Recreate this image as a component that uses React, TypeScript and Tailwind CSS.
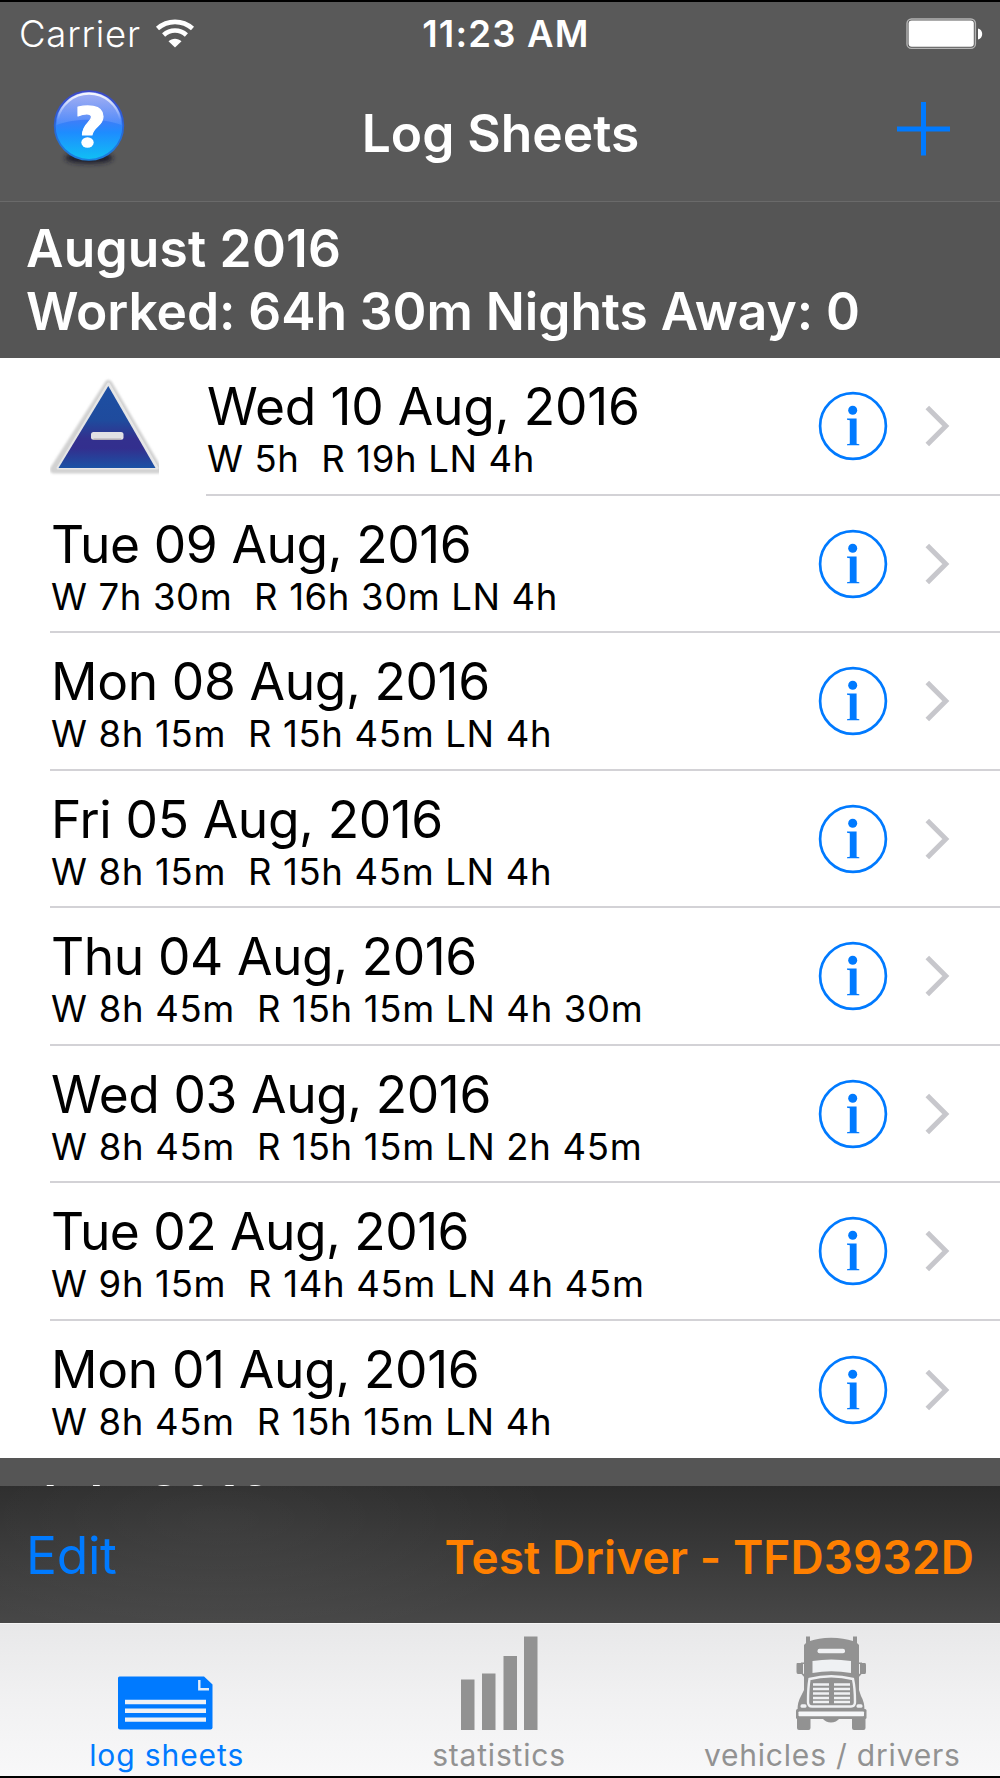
import type { ReactNode } from 'react';

type Entry = {
  date: string;
  hours: string;
  flagged?: boolean;
  dateSpacing: string;
  hoursSpacing: string;
};

const entries: Entry[] = [
  { date: 'Wed 10 Aug, 2016', hours: 'W 5h  R 19h LN 4h', flagged: true, dateSpacing: 'tracking-[-0.19px]', hoursSpacing: 'tracking-[0.63px]' },
  { date: 'Tue 09 Aug, 2016', hours: 'W 7h 30m  R 16h 30m LN 4h', dateSpacing: 'tracking-[-0.42px]', hoursSpacing: 'tracking-[0.63px]' },
  { date: 'Mon 08 Aug, 2016', hours: 'W 8h 15m  R 15h 45m LN 4h', dateSpacing: 'tracking-[-0.38px]', hoursSpacing: 'tracking-[0.67px]' },
  { date: 'Fri 05 Aug, 2016', hours: 'W 8h 15m  R 15h 45m LN 4h', dateSpacing: 'tracking-[-0.38px]', hoursSpacing: 'tracking-[0.67px]' },
  { date: 'Thu 04 Aug, 2016', hours: 'W 8h 45m  R 15h 15m LN 4h 30m', dateSpacing: 'tracking-[-0.42px]', hoursSpacing: 'tracking-[0.7px]' },
  { date: 'Wed 03 Aug, 2016', hours: 'W 8h 45m  R 15h 15m LN 2h 45m', dateSpacing: 'tracking-[-0.42px]', hoursSpacing: 'tracking-[0.7px]' },
  { date: 'Tue 02 Aug, 2016', hours: 'W 9h 15m  R 14h 45m LN 4h 45m', dateSpacing: 'tracking-[-0.53px]', hoursSpacing: 'tracking-[0.68px]' },
  { date: 'Mon 01 Aug, 2016', hours: 'W 8h 45m  R 15h 15m LN 4h', dateSpacing: 'tracking-[-0.34px]', hoursSpacing: 'tracking-[0.67px]' },
];

const WifiIcon = () => (
  <svg className="ml-[14px] h-[30px] w-[40px]" viewBox="0 0 40 30" fill="none">
    <path d="M2.500 9.500C12.500 .6 27.500 .6 37.500 9.500" stroke="#fff" strokeWidth="4.600" />
    <path d="M8.600 16C15.200 10 24.800 10 31.400 16" stroke="#fff" strokeWidth="4.600" />
    <path d="M20 28.500 13.500 22.200C17 18.800 23 18.800 26.500 22.200Z" fill="#fff" />
  </svg>
);

const BatteryIcon = () => (
  <svg className="h-[32px] w-[77px]" viewBox="0 0 77 32">
    <rect x="1" y="1" width="68.400" height="29.400" rx="4.500" fill="none" stroke="#b4b4b4" strokeWidth="1.400" />
    <rect x="2.600" y="2.600" width="65.200" height="26.200" rx="3" fill="#fff" />
    <path d="M72 10.500c5.600 1 5.600 10 0 11Z" fill="#fff" />
  </svg>
);

const HelpIcon = () => (
  <svg className="h-[80px] w-[76px]" viewBox="0 0 76 80">
    <defs>
      <linearGradient id="help-ball" x1="0" y1="0" x2="0" y2="1">
        <stop offset="0" stopColor="#6a7cec" />
        <stop offset="0.42" stopColor="#3f7df8" />
        <stop offset="0.6" stopColor="#1e8cff" />
        <stop offset="1" stopColor="#10c0f4" />
      </linearGradient>
      <linearGradient id="help-gloss" x1="0" y1="0" x2="0" y2="1">
        <stop offset="0" stopColor="#fff" stopOpacity="0.4" />
        <stop offset="1" stopColor="#fff" stopOpacity="0.1" />
      </linearGradient>
      <linearGradient id="help-rim" x1="0" y1="0" x2="0" y2="1">
        <stop offset="0" stopColor="#3c48c8" />
        <stop offset="1" stopColor="#1a80e0" />
      </linearGradient>
      <linearGradient id="help-shine" x1="0" y1="0" x2="0" y2="1">
        <stop offset="0" stopColor="#fff" stopOpacity="0.9" />
        <stop offset="1" stopColor="#fff" stopOpacity="0" />
      </linearGradient>
      <filter id="help-blur" x="-20%" y="-60%" width="140%" height="220%">
        <feGaussianBlur stdDeviation="2.4" />
      </filter>
    </defs>
    <ellipse cx="38" cy="69" rx="24" ry="5.500" fill="#1c1c2c" filter="url(#help-blur)" />
    <circle cx="38" cy="36.500" r="34.300" fill="url(#help-ball)" stroke="url(#help-rim)" strokeWidth="1.800" />
    <path d="M5.500 36a32.500 33 0 0 1 65 0C52 29 24 29 5.500 36Z" fill="url(#help-gloss)" />
    <path d="M6.500 31a32 32 0 0 1 63 0" fill="none" stroke="url(#help-shine)" strokeWidth="2.200" />
    <path
      d="M27 18C34 16.500 52 14.500 52 27.500C52 37 42.500 37 41 46H31.500C31.500 35 40.500 33 40.500 28C40.500 23.500 32.500 24.500 27 27Z"
      fill="#fff"
      stroke="#fff"
      strokeWidth="1.200"
      strokeLinejoin="round"
    />
    <ellipse cx="36.500" cy="53.500" rx="6.200" ry="5.200" fill="#fff" />
  </svg>
);

const PlusIcon = () => (
  <svg className="h-[54px] w-[54px]" viewBox="0 0 54 54">
    <path d="M27.500 0V53.500M1 27H54" stroke="#007aff" strokeWidth="5" />
  </svg>
);

const TriangleIcon = () => (
  <svg className="h-[104px] w-[109px]" viewBox="0 0 109 104">
    <defs>
      <linearGradient id="tri-fill" x1="0" y1="0" x2="0" y2="1">
        <stop offset="0" stopColor="#1d4fa3" />
        <stop offset="0.42" stopColor="#1f4b9d" />
        <stop offset="0.64" stopColor="#33308e" />
        <stop offset="0.76" stopColor="#332f8e" />
        <stop offset="1" stopColor="#1a52a5" />
      </linearGradient>
      <filter id="tri-blur" x="-10%" y="-10%" width="120%" height="120%">
        <feGaussianBlur stdDeviation="1.200" />
      </filter>
    </defs>
    <path d="M58.500 9 108 94.500H4Z" fill="#d2d2d2" stroke="#d2d2d2" strokeWidth="8" strokeLinejoin="round" filter="url(#tri-blur)" />
    <path d="M58.500 9 107 93H8Z" fill="#e2e2e2" stroke="#e6e6e6" strokeWidth="3" strokeLinejoin="round" />
    <path d="M58.300 11 105.500 93H8.500Z" fill="url(#tri-fill)" />
    <rect x="41" y="57" width="32.500" height="7.700" rx="2.500" fill="#e2e0e4" />
    <path d="M43.500 64.200H71" stroke="#b5aeb6" strokeWidth="1.500" />
  </svg>
);

const InfoIcon = () => (
  <svg className="h-[70px] w-[70px] shrink-0" viewBox="0 0 70 70" fill="#007aff">
    <circle cx="35" cy="35" r="32.900" fill="none" stroke="#007aff" strokeWidth="2.700" />
    <circle cx="34.700" cy="19.200" r="4.500" />
    <path d="M29 27.600H38.600V52.800L41.300 53.300V54.300H29V53.300L31.800 52.800V29.300L29 28.800Z" />
  </svg>
);

const ChevronIcon = () => (
  <svg className="ml-[36px] h-[44px] w-[28px] shrink-0" viewBox="0 0 28 44">
    <path d="M3.300 3.500 21.800 22 3.300 40.500" fill="none" stroke="#c7c7cc" strokeWidth="5" />
  </svg>
);

const SheetIcon = () => (
  <svg className="mr-[3px] h-[94px] w-[96px]" viewBox="0 0 96 94">
    <path d="M2.500 40.500H87L95.500 48.500V91.500Q95.500 93.500 93.500 93.500H3Q1 93.500 1 91.500V42Q1 40.500 2.500 40.500Z" fill="#007aff" />
    <path d="M8 66H89M8 74.800H89M8 83.600H89" stroke="#eef1f5" strokeWidth="4.400" />
    <path d="M82.300 44V53.300H92" fill="none" stroke="#e4edf8" strokeWidth="2.400" />
  </svg>
);

const BarsIcon = () => (
  <svg className="h-[94px] w-[78px]" viewBox="0 0 78 94" fill="#929292">
    <rect x="0" y="43.500" width="13.500" height="50.500" />
    <rect x="21" y="37.500" width="13.500" height="56.500" />
    <rect x="42.500" y="20" width="13.500" height="74" />
    <rect x="63" y="0.500" width="13.500" height="93.500" />
  </svg>
);

const TruckIcon = () => (
  <svg className="mr-[4px] h-[94px] w-[71px]" viewBox="0 0 71 94" fill="#929292">
    {/* cab, fenders and exhaust stacks */}
    <path d="M10 0.500H14V5Q22 2 35 1.800Q48 2 57 5V0.500H61V7L63 9V54L65 60Q68.500 66 68.500 74H1.500Q1.500 66 5 60L8 54V9L10 7Z" />
    <path d="M1 27H7V38H2Q0.500 38 0.500 36V29Q0.500 27 1 27ZM64 27H69Q70 27 70 29V36Q70 38 69 38H64Z" />
    <path d="M5 28V26.500H9V28ZM62 28V26.500H66V28ZM5 37.500 9 42V38ZM66 37.500 62 42V38Z" />
    {/* visor and windscreen */}
    <rect x="21.500" y="12.800" width="27.500" height="4.400" rx="2" fill="#f0f1f3" />
    <path d="M16.500 25Q35 22 55 25V37Q35 33.500 16.500 37Z" fill="#eff1f3" />
    {/* grille */}
    <path
      d="M13.500 43Q35 37.500 57 43Q59 52 59 66Q59 70.500 55 70.500H16Q12 70.500 12 66Q12 52 13.500 43Z"
      fill="none"
      stroke="#f0f1f3"
      strokeWidth="2.400"
    />
    <path
      d="M17 48.500H33M17 53H33M17 57.500H33M17 62H33M17 66H33M38 48.500H54M38 53H54M38 57.500H54M38 62H54M38 66H54"
      stroke="#f0f1f3"
      strokeWidth="2.300"
    />
    {/* headlights and bumper */}
    <rect x="4.500" y="68.300" width="6" height="3.500" rx="1.500" fill="#f0f1f3" />
    <rect x="60.500" y="68.300" width="6" height="3.500" rx="1.500" fill="#f0f1f3" />
    <rect x="0" y="73" width="70.500" height="10" rx="1.500" />
    <rect x="2.500" y="75.500" width="65.500" height="4.800" rx="0.800" fill="#f5f6f8" />
    <path d="M1 82H14.500V92Q14.500 94 12.500 94H3Q1 94 1 92ZM56 82H69.500V92Q69.500 94 67.500 94H58Q56 94 56 92ZM26 82H44Q40 86.500 35 86.500Q30 86.500 26 82Z" />
  </svg>
);

const SectionHeader = ({ title, summary }: { title: string; summary?: string }) => (
  <div className="h-[156px] bg-[#555] pt-[15px] pl-[26px] text-[51.5px] leading-[62.5px] font-semibold text-white">
    <div className={summary ? 'tracking-[0.2px]' : 'pl-px text-[52.5px]'}>{title}</div>
    {summary && <div className="tracking-[-0.05px]">{summary}</div>}
  </div>
);

const EntryRow = ({ entry, last }: { entry: Entry; last: boolean }) => (
  <div className="flex h-[137.5px] pl-[50px]">
    {entry.flagged && (
      <div className="w-[156px] shrink-0 pt-[17px]">
        <TriangleIcon />
      </div>
    )}
    <div className={`flex flex-1 ${last ? '' : 'border-b-2 border-[#d3d2d6]'}`}>
      <div className="flex-1 pt-[21px] pl-px whitespace-pre text-black">
        <div className={`text-[51.5px] leading-[54px] ${entry.dateSpacing}`}>{entry.date}</div>
        <div className={`text-[36.5px] leading-[52px] ${entry.hoursSpacing}`}>{entry.hours}</div>
      </div>
      <div className="flex items-center pt-px pr-[48px]">
        <InfoIcon />
        <ChevronIcon />
      </div>
    </div>
  </div>
);

const Tab = ({ label, active, children }: { label: string; active?: boolean; children: ReactNode }) => (
  <div className={`flex flex-1 flex-col items-center pt-[12px] ${active ? 'text-[#007aff]' : 'text-[#929292]'}`}>
    {children}
    <span className={`mt-[7px] text-[30px] leading-[36px] ${active ? 'tracking-[0.9px]' : 'pr-[2px] tracking-[0.8px]'}`}>{label}</span>
  </div>
);

export default function App() {
  return (
    <div className="flex h-[1778px] w-[1000px] flex-col overflow-hidden border-y-2 border-black bg-white font-['Inter',sans-serif]">
      {/* Status bar and navigation bar */}
      <header className="h-[200px] shrink-0 border-b border-[#6a6a6a] bg-[#595959] text-white">
        <div className="grid h-[63px] grid-cols-3 items-center pt-px pr-[17px] pl-[19px] text-[36.5px]">
          <div className="flex items-center">
            <span className="pt-px font-light tracking-[0.8px]">Carrier</span>
            <WifiIcon />
          </div>
          <div className="pt-px pl-[10px] text-center font-semibold tracking-[1.2px]">11:23 AM</div>
          <div className="flex justify-end">
            <BatteryIcon />
          </div>
        </div>
        <div className="grid grid-cols-3 items-start pr-[50px] pl-[51px]">
          <div className="pt-[24px]">
            <HelpIcon />
          </div>
          <h1 className="pt-[38px] text-center text-[51.5px] leading-[60px] font-semibold whitespace-nowrap">Log Sheets</h1>
          <div className="flex justify-end pt-[37px]">
            <PlusIcon />
          </div>
        </div>
      </header>

      {/* Entry list, the next month is cut off by the toolbar */}
      <main className="h-[1284px] shrink-0 overflow-hidden">
        <SectionHeader title="August 2016" summary="Worked: 64h 30m Nights Away: 0" />
        {entries.map((entry, index) => (
          <EntryRow key={entry.date} entry={entry} last={index === entries.length - 1} />
        ))}
        <SectionHeader title="July 2016" />
      </main>

      <div className="flex h-[136.500px] shrink-0 items-start justify-between bg-[radial-gradient(ellipse_34%_90%_at_22%_25%,#ffffff0c,transparent),linear-gradient(to_bottom,#2c2c2c,#474747)] px-[26px]">
        <button className="pt-[38.5px] text-[51.5px] leading-[60px] tracking-[-0.3px] text-[#007aff]">Edit</button>
        <span className="pt-[41px] text-[46px] leading-[60px] font-semibold tracking-[0.08px] text-[#ff8000]">Test Driver - TFD3932D</span>
      </div>

      <nav className="flex flex-1 border-t border-[#f4f4f4] bg-linear-to-b from-[#e8e8e9] via-[#f1f1f2] to-[#f8f8f9]">
        <Tab label="log sheets" active>
          <SheetIcon />
        </Tab>
        <Tab label="statistics">
          <BarsIcon />
        </Tab>
        <Tab label="vehicles / drivers">
          <TruckIcon />
        </Tab>
      </nav>
    </div>
  );
}
